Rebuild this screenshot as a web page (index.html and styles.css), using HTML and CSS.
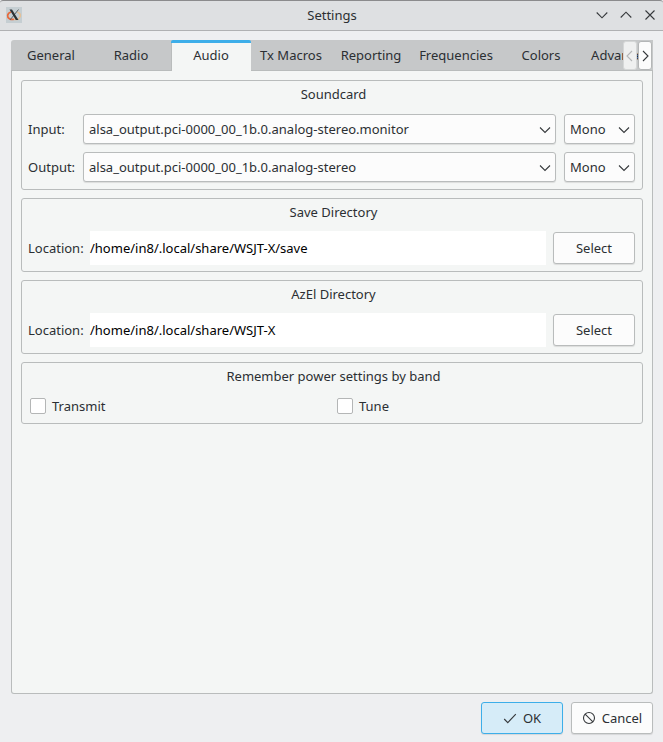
FILE: index.html
```html
<!DOCTYPE html>
<html lang="en">
<head>
<meta charset="utf-8">
<title>Settings</title>
<link rel="stylesheet" href="styles.css">
</head>
<body>
<div class="window">
  <header class="titlebar">
    <svg class="app-icon" width="16" height="16" viewBox="0 0 16 16">
      <rect width="16" height="16" fill="#c5ced2"/>
      <path d="M5 5C.8 6.500.8 10 3.500 11.700c1.500.9 3 .9 4.500.5" fill="none" stroke="#e8683a" stroke-width="1.700"/>
      <path d="M11 5c4.200 1.300 4.200 5 1.500 6.700-1.500.9-3 .9-4.500.5" fill="none" stroke="#e6c096" stroke-width="1.600"/>
      <path d="M12.500 2.500 4 13" stroke="#596165" stroke-width="1"/>
      <path d="M3.500 2.500H6l6.500 10.500H9.800z" fill="#2b3134"/>
    </svg>
    <h1 class="title">Settings</h1>
    <div class="window-controls">
      <svg width="12" height="12" viewBox="0 0 12 12"><path d="M.7 3.500 6 8.800l5.300-5.300"/></svg>
      <svg width="12" height="12" viewBox="0 0 12 12"><path d="M.7 8.500 6 3.200l5.300 5.300"/></svg>
      <svg width="12" height="12" viewBox="0 0 12 12"><path d="m1.500 1.500 9 9m0-9-9 9"/></svg>
    </div>
  </header>

  <main class="content">
    <div class="tabs">
      <nav class="tab-list">
        <span class="tab">General</span>
        <span class="tab">Radio</span>
        <span class="tab active">Audio</span>
        <span class="tab">Tx Macros</span>
        <span class="tab">Reporting</span>
        <span class="tab wide">Frequencies</span>
        <span class="tab">Colors</span>
        <span class="tab">Advanced</span>
      </nav>
      <div class="scrollers">
        <span class="scroller disabled"><svg width="7" height="12" viewBox="0 0 7 12"><path d="M6 1 1 6l5 5"/></svg></span>
        <span class="scroller"><svg width="7" height="12" viewBox="0 0 7 12"><path d="m1 1 5 5-5 5"/></svg></span>
      </div>
    </div>

    <div class="panel">
      <section class="group soundcard">
        <h2>Soundcard</h2>
        <div class="row">
          <span class="label">Input:</span>
          <div class="combo device">alsa_output.pci-0000_00_1b.0.analog-stereo.monitor<svg width="12" height="8" viewBox="0 0 12 8"><path d="m1 1.500 5 5 5-5"/></svg></div>
          <div class="combo channel">Mono<svg width="12" height="8" viewBox="0 0 12 8"><path d="m1 1.500 5 5 5-5"/></svg></div>
        </div>
        <div class="row">
          <span class="label">Output:</span>
          <div class="combo device">alsa_output.pci-0000_00_1b.0.analog-stereo<svg width="12" height="8" viewBox="0 0 12 8"><path d="m1 1.500 5 5 5-5"/></svg></div>
          <div class="combo channel">Mono<svg width="12" height="8" viewBox="0 0 12 8"><path d="m1 1.500 5 5 5-5"/></svg></div>
        </div>
      </section>

      <section class="group directory">
        <h2>Save Directory</h2>
        <div class="row">
          <span class="label">Location:</span>
          <div class="path">/home/in8/.local/share/WSJT-X/save</div>
          <div class="button">Select</div>
        </div>
      </section>

      <section class="group directory">
        <h2>AzEl Directory</h2>
        <div class="row">
          <span class="label">Location:</span>
          <div class="path">/home/in8/.local/share/WSJT-X</div>
          <div class="button">Select</div>
        </div>
      </section>

      <section class="group power">
        <h2>Remember power settings by band</h2>
        <div class="checks">
          <div class="check"><span class="box"></span>Transmit</div>
          <div class="check"><span class="box"></span>Tune</div>
        </div>
      </section>
    </div>
  </main>

  <footer class="actions">
    <div class="button primary"><svg width="14" height="14" viewBox="0 0 14 14"><path d="m1.200 8 3.600 3.600 8-8.400"/></svg>OK</div>
    <div class="button"><svg width="14" height="14" viewBox="0 0 14 14"><circle cx="7" cy="7" r="5.500"/><path d="m3.100 3.100 7.800 7.800"/></svg>Cancel</div>
  </footer>
</div>
</body>
</html>
```

FILE: styles.css
```css
* {
  box-sizing: border-box;
}

body {
  margin: 0;
  background: #eeeff1;
  color: #2b2f33;
  font: 13px/18px "Noto Sans", sans-serif;
}

h1,
h2 {
  margin: 0;
  font-size: inherit;
  font-weight: 400;
  text-align: center;
}

svg {
  flex: none;
  fill: none;
  stroke: #36393c;
  stroke-width: 1.1;
}

.app-icon {
  stroke: none;
}

.window {
  display: flex;
  flex-direction: column;
  width: 663px;
  height: 742px;
}

.titlebar {
  display: grid;
  grid-template-columns: 72px 1fr 72px;
  align-items: center;
  height: 31px;
  padding: 0 7px 1px 6px;
  border-top: 1px solid #8b8b8d;
  border-bottom: 1px solid #b0b1b3;
  border-radius: 3px 3px 0 0;
  background: #dee0e2;
}

.title {
  padding-left: 2px;
}

.window-controls {
  display: flex;
  justify-content: flex-end;
  gap: 12px;
}

.content {
  display: flex;
  flex-direction: column;
  height: 663px;
  padding: 9px 10px 0 11px;
}

.tabs {
  position: relative;
  height: 31px;
  border-radius: 3px 0 0 0;
  background: #c6c8c9;
  overflow: hidden;
}

.tab-list {
  display: flex;
  height: 31px;
}

.tab {
  flex: none;
  width: 80px;
  padding-top: 6px;
  border-bottom: 1px solid #b9bcbc;
  text-align: center;
}

.tab.wide {
  width: 90px;
}

.tab.active {
  border-top: 3px solid #3daee9;
  border-bottom: 0;
  border-radius: 2px 2px 0 0;
  padding-top: 3px;
  background: #f4f6f5;
  box-shadow: inset 1px 0 #b9bcbc;
}

.scrollers {
  position: absolute;
  top: 1px;
  right: 1px;
  display: flex;
  gap: 1px;
}

.scroller {
  display: flex;
  align-items: center;
  justify-content: center;
  width: 14px;
  height: 29px;
  border: 1px solid #b4b6b7;
  border-radius: 3px;
  background: #fcfcfc;
}

.scroller.disabled {
  padding-right: 1px;
  border-color: #d5d7d7;
  background: #eff0f0;
}

.scroller.disabled svg {
  stroke: #b5b7b8;
}

.panel {
  flex: 1;
  display: flex;
  flex-direction: column;
  gap: 8px;
  padding: 9px;
  border: 1px solid #b9bcbc;
  border-top: 0;
  border-radius: 0 0 3px 3px;
  background: #f4f6f5;
}

.group {
  padding: 4px 7px 0 6px;
  border: 1px solid #b9bcbc;
  border-radius: 3px;
}

.group h2 {
  height: 18px;
  padding-left: 4px;
}

.row {
  display: flex;
  align-items: center;
}

.soundcard {
  height: 110px;
}

.soundcard .row {
  height: 30px;
  margin-top: 8px;
}

.soundcard h2 {
  margin-bottom: 11px;
}

.soundcard .row:nth-child(2) {
  margin-top: 0;
}

.soundcard .label {
  width: 55px;
}

.combo {
  display: flex;
  align-items: center;
  justify-content: space-between;
  height: 30px;
  padding: 0 4px 0 5px;
  border: 1px solid #b9bcbc;
  border-radius: 3px;
  background: #fcfcfc;
  box-shadow: 0 1px 1px #0000001a;
}

.combo svg {
  position: relative;
  top: 1px;
}

.device {
  width: 473px;
  margin-right: 8px;
}

.channel {
  width: 71px;
}

.directory {
  height: 74px;
}

.directory .row {
  height: 34px;
  margin-top: 10px;
}

.directory .label {
  width: 62px;
}

.path {
  width: 456px;
  height: 34px;
  margin-right: 7px;
  background: #fff;
  color: #000;
  line-height: 34px;
}

.button {
  display: flex;
  align-items: center;
  justify-content: center;
  gap: 6px;
  width: 82px;
  height: 32px;
  border: 1px solid #b9bcbc;
  border-radius: 3px;
  background: #fcfcfc;
  box-shadow: 0 1px 1px #0000001a;
}

.power {
  height: 62px;
}

.checks {
  display: flex;
  margin: 12px 0 0 2px;
}

.check {
  flex: none;
  display: flex;
  align-items: center;
  gap: 6px;
}

.check:first-child {
  width: 307px;
}

.box {
  width: 16px;
  height: 16px;
  border: 1px solid #b4b6b6;
  border-radius: 2px;
  background: #fff;
}

.actions {
  display: flex;
  justify-content: flex-end;
  gap: 8px;
  padding: 8px 10px 0;
}

.primary {
  border-color: #3daee9;
  background: #d6ecf8;
}
```
